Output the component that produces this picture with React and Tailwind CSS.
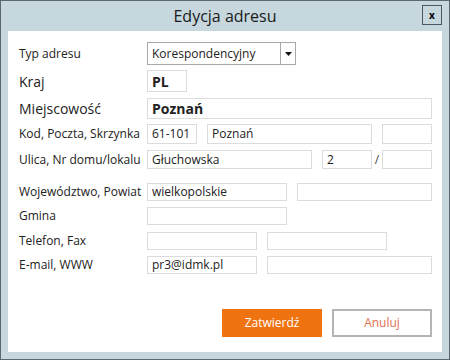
import React from 'react';

const FONT = { fontFamily: '"Open Sans", "Noto Sans", sans-serif' };

function Box({ w, children, bold, big }) {
  return (
    <div
      className={`${w} h-full border border-[#dcdcdc] bg-white flex items-center pl-[4px] text-[#222] ${bold ? 'font-bold' : ''} ${big ? 'text-[14px]' : 'text-[12px]'}`}
    >
      {children}
    </div>
  );
}

function Row({ label, big, className, children }) {
  return (
    <div className={`flex items-center ${className}`}>
      <div className={`w-[128px] shrink-0 text-[#222] ${big ? 'text-[14px]' : 'text-[12px]'}`}>{label}</div>
      <div className="flex h-full items-center gap-[10px]">{children}</div>
    </div>
  );
}

export default function App() {
  return (
    <div
      className="w-[450px] h-[360px] border border-[#5c6870] bg-[#c6d7de] flex flex-col"
      style={FONT}
    >
      {/* Title bar */}
      <div className="relative h-[30px] shrink-0 flex items-center justify-center">
        <span className="text-[16px] text-[#1a1a1a] leading-none">Edycja adresu</span>
        <button className="absolute right-[7px] top-[4px] w-[20px] h-[20px] border border-[#4a5660] flex items-center justify-center text-[10px] font-bold leading-none text-black">
          x
        </button>
      </div>

      {/* Content */}
      <div className="mx-[7px] h-[321px] bg-white pt-[11px] pl-[11px]">
        <Row label="Typ adresu" className="h-[23px]">
          <div className="w-[149px] h-full border border-[#a8a8a8] flex">
            <div className="flex-1 flex items-center pl-[4px] text-[12px] text-[#222]">Korespondencyjny</div>
            <div className="w-[15px] border-l border-[#a8a8a8] flex items-center justify-center">
              <svg width="7" height="4" viewBox="0 0 7 4"><path d="M0 0h7L3.5 4z" fill="#111" /></svg>
            </div>
          </div>
        </Row>
        <Row label="Kraj" big className="h-[22px] mt-[5px]">
          <Box w="w-[40px]" bold big>PL</Box>
        </Row>
        <Row label="Miejscowość" big className="h-[21px] mt-[6px]">
          <Box w="w-[285px]" bold big>Poznań</Box>
        </Row>
        <Row label="Kod, Poczta, Skrzynka" className="h-[20px] mt-[5px]">
          <Box w="w-[50px]">61-101</Box>
          <Box w="w-[165px]">Poznań</Box>
          <Box w="w-[50px]" />
        </Row>
        <Row label="Ulica, Nr domu/lokalu" className="h-[19px] mt-[6px]">
          <Box w="w-[165px]">Głuchowska</Box>
          <div className="flex h-full items-center">
            <Box w="w-[50px]">2</Box>
            <div className="w-[10px] text-center text-[12px] text-[#444]">/</div>
            <Box w="w-[50px]" />
          </div>
        </Row>
        <Row label="Województwo, Powiat" className="h-[18px] mt-[14px]">
          <Box w="w-[140px]">wielkopolskie</Box>
          <Box w="w-[135px]" />
        </Row>
        <Row label="Gmina" className="h-[18px] mt-[6px]">
          <Box w="w-[140px]" />
        </Row>
        <Row label="Telefon, Fax" className="h-[18px] mt-[7px]">
          <Box w="w-[110px]" />
          <Box w="w-[120px]" />
        </Row>
        <Row label="E-mail, WWW" className="h-[18px] mt-[6px]">
          <Box w="w-[110px]">pr3@idmk.pl</Box>
          <Box w="w-[165px]" />
        </Row>

        {/* Buttons */}
        <div className="flex justify-end gap-[10px] mt-[35px] pr-[10px]">
          <button className="w-[100px] h-[28px] bg-[#ef7411] text-white text-[12px]">Zatwierdź</button>
          <button className="w-[100px] h-[28px] bg-white border-2 border-[#b4b4b4] text-[#e2704f] text-[12px]">Anuluj</button>
        </div>
      </div>
    </div>
  );
}
